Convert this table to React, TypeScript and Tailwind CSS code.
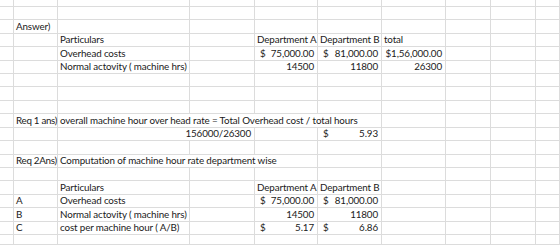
import React from "react";

type Cell = { c: number; span?: number; t?: string; right?: boolean; usd?: string; tight?: boolean };

const rows: Cell[][] = [
  [],
  [],
  [{ c: 1, t: "Answer)" }],
  [
    { c: 2, t: "Particulars" },
    { c: 4, t: "Department A" },
    { c: 5, t: "Department B" },
    { c: 6, t: "total" },
  ],
  [
    { c: 2, t: "Overhead costs" },
    { c: 4, usd: "75,000.00" },
    { c: 5, usd: "81,000.00" },
    { c: 6, t: "$1,56,000.00", right: true },
  ],
  [
    { c: 2, t: "Normal actovity ( machine hrs)" },
    { c: 4, t: "14500", right: true },
    { c: 5, t: "11800", right: true },
    { c: 6, t: "26300", right: true },
  ],
  [],
  [],
  [],
  [
    { c: 1, t: "Req 1 ans)", tight: true },
    { c: 2, span: 4, t: "overall machine hour over head rate = Total Overhead cost / total hours" },
  ],
  [
    { c: 2, span: 2, t: "156000/26300", right: true },
    { c: 5, usd: "5.93" },
  ],
  [],
  [
    { c: 1, t: "Req 2Ans)", tight: true },
    { c: 2, span: 3, t: "Computation of machine hour rate department wise" },
  ],
  [],
  [
    { c: 2, t: "Particulars" },
    { c: 4, t: "Department A" },
    { c: 5, t: "Department B" },
  ],
  [
    { c: 1, t: "A" },
    { c: 2, t: "Overhead costs" },
    { c: 4, usd: "75,000.00" },
    { c: 5, usd: "81,000.00" },
  ],
  [
    { c: 1, t: "B" },
    { c: 2, t: "Normal actovity ( machine hrs)" },
    { c: 4, t: "14500", right: true },
    { c: 5, t: "11800", right: true },
  ],
  [
    { c: 1, t: "C" },
    { c: 2, t: "cost per machine hour ( A/B)" },
    { c: 4, usd: "5.17" },
    { c: 5, usd: "6.86" },
  ],
  [],
];

const cellBase =
  "border-r border-b border-[#dcdcdc] flex items-end pb-[1px] px-[2px] whitespace-nowrap leading-none";

const SheetRow = ({ cells, r }: { cells: Cell[]; r: number }) => {
  const out: React.ReactNode[] = [];
  let c = 0;
  while (c < 10) {
    const cell = cells.find((x) => x.c === c);
    if (!cell) {
      out.push(<div key={`${r}-${c}`} className={cellBase}></div>);
      c++;
      continue;
    }
    const span = cell.span ?? 1;
    out.push(
      <div
        key={`${r}-${c}`}
        className={`${cellBase} ${cell.right ? "justify-end pr-[3px]" : ""} ${cell.usd ? "justify-between pl-[5px] pr-[3px]" : ""} ${cell.tight ? "tracking-[-0.3px]" : ""}`}
        style={span > 1 ? { gridColumn: `span ${span} / span ${span}` } : undefined}
      >
        {cell.usd ? (
          <>
            <span>$</span>
            <span>{cell.usd}</span>
          </>
        ) : (
          cell.t
        )}
      </div>
    );
    c += span;
  }
  return <>{out}</>;
};

const App = () => {
  return (
    <div className="w-[560px] h-[245px] bg-white overflow-hidden font-['Lato',sans-serif] text-[9.8px] tracking-[-0.12px] text-[#1a1a1a]">
      <div className="grid h-[245px] grid-cols-[14px_44px_132px_65px_63px_64px_64px_45px_45px_1fr] grid-rows-[7px_13px_14px_13px_14px_13px_13px_14px_13px_14px_13px_14px_13px_13px_14px_13px_14px_13px_1fr]">
        {rows.map((cells, r) => (
          <SheetRow key={`row-${r}`} cells={cells} r={r} />
        ))}
      </div>
    </div>
  );
};

export default App;
